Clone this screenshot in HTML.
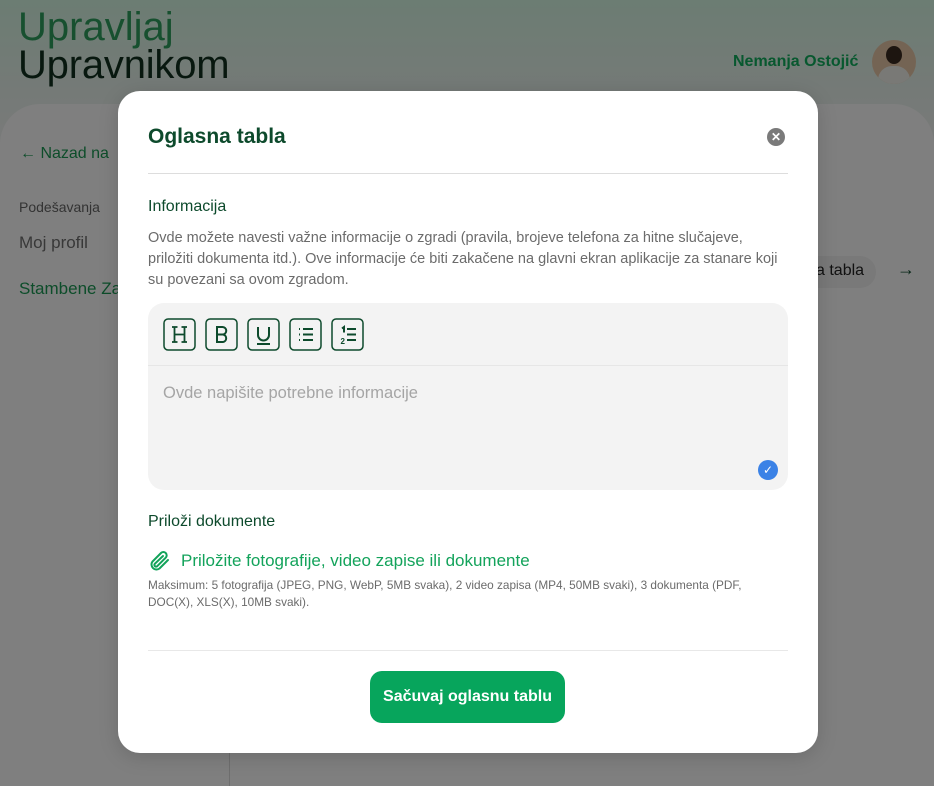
<!DOCTYPE html>
<html><head><meta charset="utf-8"><style>
*{box-sizing:border-box;margin:0;padding:0}
html,body{width:934px;height:786px;overflow:hidden}
body{font-family:"Liberation Sans",sans-serif;position:relative;background:#f4f4f4}
.top{position:absolute;left:0;top:0;width:934px;height:140px;background:linear-gradient(180deg,#d8fae6 0%,#e9f5ee 60%,#f2f5f3 100%)}
.panel{position:absolute;left:0;top:104px;width:934px;height:682px;background:#fff;border-radius:40px 40px 0 0}
.logo1{position:absolute;left:18px;top:5px;font-size:40px;color:#2ea05f}
.logo2{position:absolute;left:18px;top:43px;font-size:40px;color:#10301f;letter-spacing:-0.2px}
.user{position:absolute;left:733px;top:53px;font-size:16px;color:#10b05e;font-weight:bold}
.av{position:absolute;left:872px;top:40px;width:44px;height:44px;border-radius:50%;background:#e8c9a8;overflow:hidden}
.side{position:absolute}
.ov{position:absolute;left:0;top:0;width:934px;height:786px;background:rgba(0,0,0,.5)}
.modal{position:absolute;left:118px;top:91px;width:700px;height:662px;background:#fff;border-radius:22px;box-shadow:0 4px 20px rgba(0,0,0,.15)}
.g{color:#0d4a2c}
</style></head><body>
<div class="top"></div>
<div class="logo1">Upravljaj</div>
<div class="logo2">Upravnikom</div>
<div class="user">Nemanja Ostojić</div>
<div class="av"><div style="position:absolute;left:14px;top:6px;width:16px;height:18px;border-radius:50%;background:#3a2a20"></div><div style="position:absolute;left:6px;top:26px;width:32px;height:22px;border-radius:14px 14px 0 0;background:#f2f2ec"></div></div>
<div class="panel"></div>
<div class="side" style="left:20px;top:145px;font-size:16px;color:#1b9a55">← Nazad na</div>
<div class="side" style="left:19px;top:199px;font-size:14px;color:#666">Podešavanja</div>
<div class="side" style="left:19px;top:233px;font-size:17px;color:#707070">Moj profil</div>
<div class="side" style="left:19px;top:279px;font-size:17px;color:#1b9a55">Stambene Za</div>
<div style="position:absolute;left:229px;top:104px;width:1px;height:682px;background:#dcdcdc"></div>
<div style="position:absolute;left:800px;top:256px;width:76px;height:32px;border-radius:16px;background:#f2f2f2"></div>
<div class="side" style="left:816px;top:262px;font-size:16px;color:#222">a tabla</div>
<div class="side" style="left:897px;top:259px;font-size:18px;color:#0d4a2c">→</div>
<div class="ov"></div>

<div class="modal">
 <div class="g" style="position:absolute;left:30px;top:34px;font-size:21px;font-weight:bold">Oglasna tabla</div>
 <div style="position:absolute;left:649px;top:37px;width:18px;height:18px;border-radius:50%;background:#7a7a7a;color:#fff;font-size:12px;font-weight:bold;text-align:center;line-height:18px">✕</div>
 <div style="position:absolute;left:30px;top:82px;width:640px;height:1px;background:#ddd"></div>
 <div class="g" style="position:absolute;left:30px;top:107px;font-size:16px">Informacija</div>
 <div style="position:absolute;left:30px;top:137px;width:630px;font-size:14.5px;line-height:21px;color:#6b6b6b">Ovde možete navesti važne informacije o zgradi (pravila, brojeve telefona za hitne slučajeve, priložiti dokumenta itd.). Ove informacije će biti zakačene na glavni ekran aplikacije za stanare koji su povezani sa ovom zgradom.</div>
 <div style="position:absolute;left:30px;top:212px;width:640px;height:187px;background:#f3f3f3;border-radius:16px">
  <div style="position:absolute;left:0;top:62px;width:640px;height:1px;background:#e6e6e6"></div>
  <svg style="position:absolute;left:15px;top:15px" width="205" height="33" viewBox="0 0 205 33" fill="none" stroke="#0d4a2c" stroke-width="1.5">
   <rect x="1" y="1" width="31" height="31" rx="4"/><rect x="43" y="1" width="31" height="31" rx="4"/><rect x="85" y="1" width="31" height="31" rx="4"/><rect x="127" y="1" width="31" height="31" rx="4"/><rect x="169" y="1" width="31" height="31" rx="4"/>
   <path d="M9 9h5.5M18.5 9h5.5M11.5 9v15M21.5 9v15M11.5 16.5h10M9 24h5.5M18.5 24h5.5" stroke-width="1.8"/>
   <path d="M54 9v15h6a3.8 3.8 0 0 0 0-7.5h-6h5.5a3.7 3.7 0 0 0 0-7.5H54z" stroke-width="2"/>
   <path d="M95 9v8a5.5 5.5 0 0 0 11 0V9M94 26h13" stroke-width="2"/>
   <path d="M136 11h1M136 16.5h1M136 22h1M140 11h10M140 16.5h10M140 22h10" stroke-width="2"/>
   <path d="M179 10.5l2-1.5v5.5M184 11h9M184 16.5h9M184 22h9" stroke-width="2"/>
   <text x="177.5" y="26" font-size="8" font-weight="bold" fill="#0d4a2c" stroke="none" font-family="Liberation Sans">2</text>
  </svg>
  <div style="position:absolute;left:15px;top:81px;font-size:16.5px;color:#a5a5a5">Ovde napišite potrebne informacije</div>
  <div style="position:absolute;left:610px;top:157px;width:20px;height:20px;border-radius:50%;background:#3b82e6;color:#fff;font-size:12px;text-align:center;line-height:20px">✓</div>
 </div>
 <div class="g" style="position:absolute;left:30px;top:422px;font-size:16px">Priloži dokumente</div>
 <svg style="position:absolute;left:30px;top:457px" width="24" height="26" viewBox="0 0 24 24" fill="none" stroke="#12a35a" stroke-width="2" stroke-linecap="round"><path d="M20 11l-8.5 8.5a5 5 0 0 1-7-7L13 4a3.3 3.3 0 0 1 4.7 4.7l-8.5 8.5a1.7 1.7 0 0 1-2.4-2.4L15 7"/></svg>
 <div style="position:absolute;left:63px;top:460px;font-size:17px;color:#13a35b">Priložite fotografije, video zapise ili dokumente</div>
 <div style="position:absolute;left:30px;top:486px;width:640px;font-size:11.8px;line-height:16.5px;color:#6b6b6b">Maksimum: 5 fotografija (JPEG, PNG, WebP, 5MB svaka), 2 video zapisa (MP4, 50MB svaki), 3 dokumenta (PDF,<br>DOC(X), XLS(X), 10MB svaki).</div>
 <div style="position:absolute;left:30px;top:559px;width:640px;height:1px;background:#e8e8e8"></div>
 <div style="position:absolute;left:252px;top:580px;width:195px;height:52px;border-radius:12px;background:#07a55c;color:#fff;font-size:16px;font-weight:bold;text-align:center;line-height:52px">Sačuvaj oglasnu tablu</div>
</div>
</body></html>
